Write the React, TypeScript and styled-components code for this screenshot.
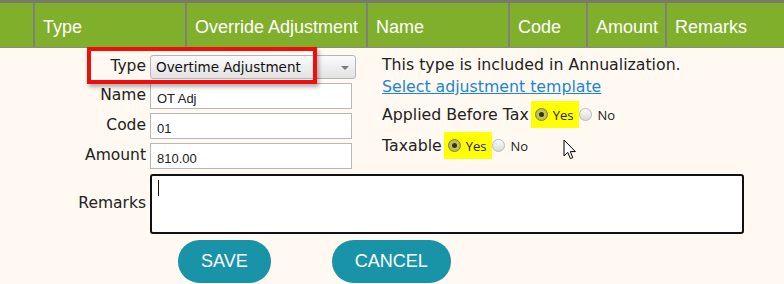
import React from 'react';
import styled, { createGlobalStyle } from 'styled-components';

const GlobalStyle = createGlobalStyle`
  html, body {
    margin: 0;
    padding: 0;
    background: #fff9f1;
  }
  body {
    font-family: "DejaVu Sans", Verdana, sans-serif;
  }
`;

const Page = styled.div`
  position: relative;
  width: 784px;
  height: 284px;
  overflow: hidden;
  background: #fff9f1;
`;

const HeaderBar = styled.div`
  display: flex;
  height: 44px;
  border-top: 3px solid #7a7a6c;
  border-bottom: 1px solid #8c8c84;
  background: #80b02b;
`;

const HeaderCell = styled.div<{ $w: number; $first?: boolean }>`
  box-sizing: border-box;
  flex: none;
  width: ${({ $w }) => $w}px;
  display: flex;
  align-items: center;
  padding: 4px 0 0 8px;
  border-left: ${({ $first }) => ($first ? 'none' : '2px solid #7f7f7f')};
  color: #fff;
  font: 18px "Liberation Sans", Arial, sans-serif;
  white-space: nowrap;
`;

const Body = styled.div`
  padding-top: 7px;
`;

const TopSection = styled.div`
  display: flex;
  align-items: flex-start;
`;

const FieldGrid = styled.div`
  display: grid;
  grid-template-columns: 146px 206px;
  column-gap: 4px;
  row-gap: 4px;
  align-items: center;
`;

const Label = styled.div`
  text-align: right;
  font-size: 15.5px;
  line-height: 1;
  color: #222;
  white-space: nowrap;
`;

const SelectBox = styled.div`
  position: relative;
  box-sizing: border-box;
  height: 24px;
  width: 206px;
  display: flex;
  align-items: center;
  padding-left: 5px;
  border: 1px solid #b5b5b5;
  border-radius: 3px;
  background: linear-gradient(#fbfbfb, #e2e2e2);
  font-size: 13.5px;
  color: #111;

  &::after {
    content: '';
    position: absolute;
    right: 6px;
    top: 10px;
    border-left: 4px solid transparent;
    border-right: 4px solid transparent;
    border-top: 4px solid #7a7a7a;
  }
`;

const TextInput = styled.input`
  box-sizing: border-box;
  width: 202px;
  height: 26px;
  margin: 0;
  padding: 4px 6px 0;
  border: 1px solid #b8b8b8;
  border-radius: 0;
  background: #fff;
  font: 13px "Liberation Sans", Arial, sans-serif;
  color: #222;
  outline: none;
`;

const InfoColumn = styled.div`
  margin-left: 26px;
  margin-top: -1px;
  font-size: 15.75px;
  line-height: 22px;
  color: #222;
`;

const InfoLine = styled.div`
  white-space: nowrap;
`;

const TemplateLink = styled.a`
  color: #1a85d6;
  text-decoration: underline;
  cursor: pointer;
`;

const RadioRow = styled.div<{ $gapTop: number }>`
  display: flex;
  align-items: center;
  height: 27px;
  margin-top: ${({ $gapTop }) => $gapTop}px;
  white-space: nowrap;
`;

const RowLabel = styled.span`
  margin-right: 2px;
`;

const Choice = styled.span<{ $highlight?: boolean }>`
  display: inline-flex;
  align-items: center;
  align-self: stretch;
  gap: 5px;
  padding: 0 6px 0 4px;
  background: ${({ $highlight }) => ($highlight ? '#ffff00' : 'transparent')};
  font: 13px "Open Sans", "Liberation Sans", sans-serif;
  color: #222;
`;

const ChoicePlain = styled(Choice)`
  padding: 0;
`;

const Radio = styled.span<{ $checked?: boolean }>`
  position: relative;
  box-sizing: border-box;
  width: 13px;
  height: 13px;
  border-radius: 50%;
  border: 1px solid ${({ $checked }) => ($checked ? '#7d7d40' : '#b9b9b9')};
  background: ${({ $checked }) =>
    $checked ? 'radial-gradient(circle, #d0d070 0%, #b0b050 100%)' : 'linear-gradient(#fdfdfd, #d9d9d9)'};

  &::after {
    content: '';
    display: ${({ $checked }) => ($checked ? 'block' : 'none')};
    position: absolute;
    left: 3px;
    top: 3px;
    width: 5px;
    height: 5px;
    border-radius: 50%;
    background: #33330c;
  }
`;

const RemarksRow = styled.div`
  display: grid;
  grid-template-columns: 146px 594px;
  column-gap: 4px;
  align-items: center;
  margin-top: 5px;
`;

const RemarksBox = styled.div`
  box-sizing: border-box;
  height: 60px;
  padding: 4px 6px;
  border: 2px solid #111;
  border-radius: 3px;
  background: #fff;
`;

const Caret = styled.span`
  display: block;
  width: 1px;
  height: 16px;
  background: #111;
`;

const ButtonRow = styled.div`
  display: flex;
  gap: 61px;
  margin-top: 6px;
  padding-left: 178px;
`;

const PillButton = styled.button`
  height: 43px;
  padding: 0 23px;
  border: none;
  border-radius: 22px;
  background: #1993a8;
  color: #fff;
  font: 18px "Liberation Sans", Arial, sans-serif;
  cursor: pointer;
`;

const Annotation = styled.div`
  position: absolute;
  left: 87px;
  top: 47px;
  box-sizing: border-box;
  width: 230px;
  height: 37px;
  border: 4px solid #f20d0d;
  box-shadow: 2px 3px 4px rgba(0, 0, 0, 0.3);
  pointer-events: none;
`;

const Pointer = styled.svg`
  position: absolute;
  left: 563px;
  top: 139px;
`;

const columns = [
  { label: '', w: 33 },
  { label: 'Type', w: 152 },
  { label: 'Override Adjustment', w: 181 },
  { label: 'Name', w: 142 },
  { label: 'Code', w: 78 },
  { label: 'Amount', w: 79 },
  { label: 'Remarks', w: 119 },
];

export default function App() {
  return (
    <Page>
      <GlobalStyle />
      <HeaderBar>
        {columns.map((c, i) => (
          <HeaderCell key={i} $w={c.w} $first={i === 0}>
            {c.label}
          </HeaderCell>
        ))}
      </HeaderBar>

      <Body>
        <TopSection>
          <FieldGrid>
            <Label>Type</Label>
            <SelectBox>Overtime Adjustment</SelectBox>
            <Label>Name</Label>
            <TextInput readOnly defaultValue="OT Adj" />
            <Label>Code</Label>
            <TextInput readOnly defaultValue="01" />
            <Label>Amount</Label>
            <TextInput readOnly defaultValue="810.00" />
          </FieldGrid>

          <InfoColumn>
            <InfoLine>This type is included in Annualization.</InfoLine>
            <InfoLine>
              <TemplateLink>Select adjustment template</TemplateLink>
            </InfoLine>
            <RadioRow $gapTop={3}>
              <RowLabel>Applied Before Tax</RowLabel>
              <Choice $highlight>
                <Radio $checked />
                Yes
              </Choice>
              <ChoicePlain>
                <Radio />
                No
              </ChoicePlain>
            </RadioRow>
            <RadioRow $gapTop={4}>
              <RowLabel>Taxable</RowLabel>
              <Choice $highlight>
                <Radio $checked />
                Yes
              </Choice>
              <ChoicePlain>
                <Radio />
                No
              </ChoicePlain>
            </RadioRow>
          </InfoColumn>
        </TopSection>

        <RemarksRow>
          <Label>Remarks</Label>
          <RemarksBox>
            <Caret />
          </RemarksBox>
        </RemarksRow>

        <ButtonRow>
          <PillButton>SAVE</PillButton>
          <PillButton>CANCEL</PillButton>
        </ButtonRow>
      </Body>

      <Annotation />
      <Pointer width="14" height="22" viewBox="0 0 14 22">
        <path
          d="M1 1 L1 17 L4.8 13.4 L7.4 19.6 L9.8 18.6 L7.3 12.6 L12.4 12.6 Z"
          fill="#fff"
          stroke="#000"
          strokeWidth="1"
          strokeLinejoin="miter"
        />
      </Pointer>
    </Page>
  );
}
